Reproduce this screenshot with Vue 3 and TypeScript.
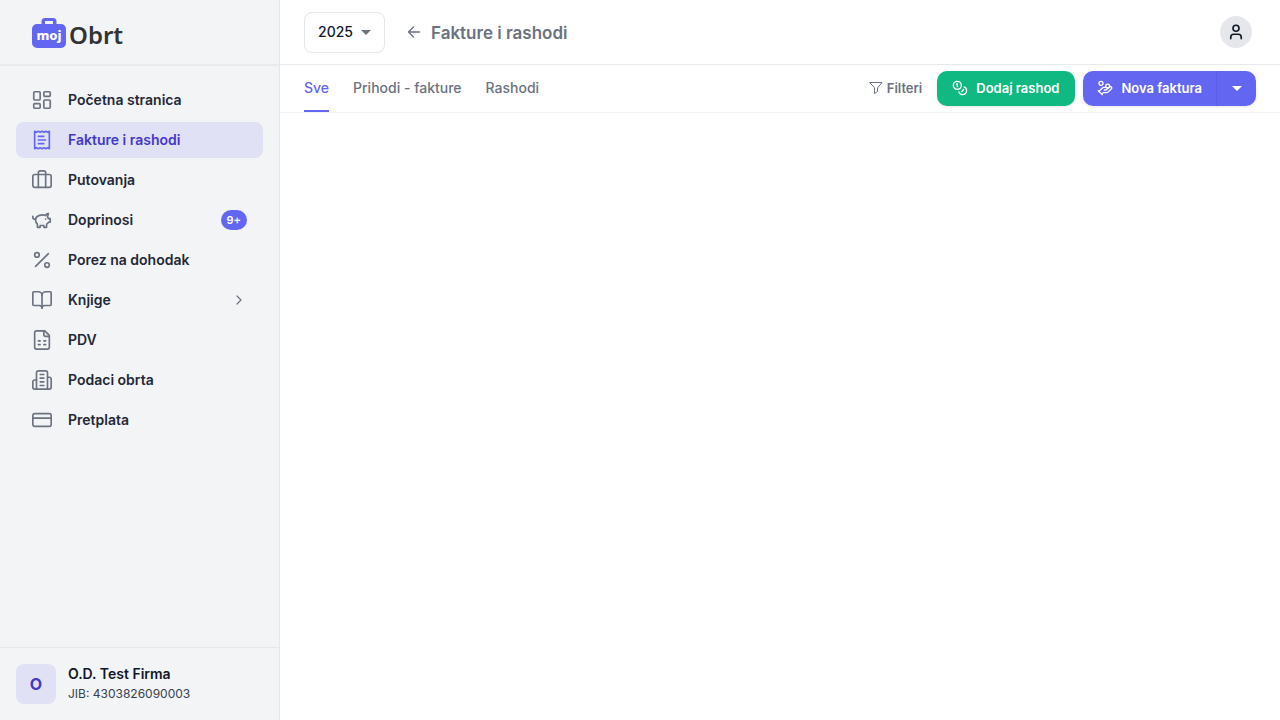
<script setup lang="ts">
import { ref } from 'vue'

interface NavItem {
  label: string
  paths: string[]
  badge?: string
  expandable?: boolean
}

const items: NavItem[] = [
  {
    label: 'Početna stranica',
    paths: ['M4 3h5a1 1 0 0 1 1 1v7a1 1 0 0 1-1 1H4a1 1 0 0 1-1-1V4a1 1 0 0 1 1-1z', 'M15 3h5a1 1 0 0 1 1 1v3a1 1 0 0 1-1 1h-5a1 1 0 0 1-1-1V4a1 1 0 0 1 1-1z', 'M15 12h5a1 1 0 0 1 1 1v7a1 1 0 0 1-1 1h-5a1 1 0 0 1-1-1v-7a1 1 0 0 1 1-1z', 'M4 16h5a1 1 0 0 1 1 1v3a1 1 0 0 1-1 1H4a1 1 0 0 1-1-1v-3a1 1 0 0 1 1-1z'],
  },
  {
    label: 'Fakture i rashodi',
    paths: ['M4 2.500v19l2-1 2 1 2-1 2 1 2-1 2 1 2-1 2 1v-19l-2 1-2-1-2 1-2-1-2 1-2-1-2 1z', 'M8 8h6M8 12h8M8 16h6'],
  },
  {
    label: 'Putovanja',
    paths: ['M4 6h16a2 2 0 0 1 2 2v10a2 2 0 0 1-2 2H4a2 2 0 0 1-2-2V8a2 2 0 0 1 2-2z', 'M8 20V4a2 2 0 0 1 2-2h4a2 2 0 0 1 2 2v16'],
  },
  {
    label: 'Doprinosi',
    badge: '9+',
    paths: ['M19 5c-1.500 0-2.800 1.400-3 2-3.500-1.500-11-.3-11 5 0 1.800.4 3.100 2 4.600V20h3v-2h4v2h3v-3.500c1-.5 1.700-1 2-2h2v-4h-2c0-1-.5-1.500-1-2z', 'M2 8v1c0 1.100.9 2 2 2h1', 'M16 11h.01'],
  },
  {
    label: 'Porez na dohodak',
    paths: ['M19 5 5 19', 'M9 6.500a2.500 2.500 0 1 1-5 0 2.500 2.500 0 0 1 5 0z', 'M20 17.500a2.500 2.500 0 1 1-5 0 2.500 2.500 0 0 1 5 0z'],
  },
  {
    label: 'Knjige',
    expandable: true,
    paths: ['M12 7v14', 'M3 18a1 1 0 0 1-1-1V4a1 1 0 0 1 1-1h5a4 4 0 0 1 4 4 4 4 0 0 1 4-4h5a1 1 0 0 1 1 1v13a1 1 0 0 1-1 1h-6a3 3 0 0 0-3 3 3 3 0 0 0-3-3z'],
  },
  {
    label: 'PDV',
    paths: ['M15 2H6a2 2 0 0 0-2 2v16a2 2 0 0 0 2 2h12a2 2 0 0 0 2-2V7z', 'M14 2v4a2 2 0 0 0 2 2h4', 'M8 13h2M14 13h2M8 17h2M14 17h2'],
  },
  {
    label: 'Podaci obrta',
    paths: ['M6 22V4a2 2 0 0 1 2-2h8a2 2 0 0 1 2 2v18z', 'M6 12H4a2 2 0 0 0-2 2v6a2 2 0 0 0 2 2h2', 'M18 9h2a2 2 0 0 1 2 2v9a2 2 0 0 1-2 2h-2', 'M10 6h4M10 10h4M10 14h4M10 18h4'],
  },
  {
    label: 'Pretplata',
    paths: ['M4 5h16a2 2 0 0 1 2 2v10a2 2 0 0 1-2 2H4a2 2 0 0 1-2-2V7a2 2 0 0 1 2-2z', 'M2 10h20'],
  },
]

const activeItem = ref('Fakture i rashodi')
const tabs = ['Sve', 'Prihodi - fakture', 'Rashodi']
const activeTab = ref('Sve')
const year = ref('2025')
</script>

<template>
  <div class="app">
    <aside class="sidebar">
      <a class="brand" href="#" aria-label="moj Obrt">
        <span class="case">
          <svg class="case-shape" viewBox="0 0 34 30" aria-hidden="true">
            <path fill="#6366f1" fill-rule="evenodd" d="M13 0h8a3.500 3.500 0 0 1 3.500 3.500V6H29a5 5 0 0 1 5 5v14a5 5 0 0 1-5 5H5a5 5 0 0 1-5-5V11a5 5 0 0 1 5-5h4.500V3.500A3.500 3.500 0 0 1 13 0zm0 3v3h8V3z" />
          </svg>
          <span class="case-text">moj</span>
        </span>
        <span class="brand-text">Obrt</span>
      </a>

      <nav class="nav">
        <a v-for="item in items" :key="item.label" href="#" class="nav-item" :class="{ active: item.label === activeItem }" @click.prevent="activeItem = item.label">
          <svg class="nav-icon" viewBox="0 0 24 24" aria-hidden="true">
            <path v-for="d in item.paths" :key="d" :d="d" />
          </svg>
          <span class="nav-label">{{ item.label }}</span>
          <span v-if="item.badge" class="badge">{{ item.badge }}</span>
          <svg v-if="item.expandable" class="chevron" viewBox="0 0 16 16" aria-hidden="true"><path d="m6 4 4 4-4 4" /></svg>
        </a>
      </nav>

      <div class="company">
        <span class="company-logo">O</span>
        <div>
          <div class="company-name">O.D. Test Firma</div>
          <div class="company-id">JIB: 4303826090003</div>
        </div>
      </div>
    </aside>

    <main class="main">
      <header class="topbar">
        <span class="year">
          <select v-model="year" aria-label="Godina">
            <option>2025</option>
            <option>2024</option>
          </select>
          <svg class="caret" viewBox="0 0 10 5" aria-hidden="true"><path d="M0 0h10L5 5z" /></svg>
        </span>
        <button class="back" type="button" aria-label="Nazad">
          <svg viewBox="0 0 14 14" aria-hidden="true"><path d="M12.500 7h-11M6.500 2l-5 5 5 5" /></svg>
        </button>
        <h1>Fakture i rashodi</h1>
        <button class="user" type="button" aria-label="Korisnik">
          <svg viewBox="0 0 24 24" aria-hidden="true"><circle cx="12" cy="7" r="4" /><path d="M19 21v-2a4 4 0 0 0-4-4H9a4 4 0 0 0-4 4v2" /></svg>
        </button>
      </header>

      <div class="toolbar">
        <div class="tabs">
          <button v-for="tab in tabs" :key="tab" type="button" class="tab" :class="{ active: tab === activeTab }" @click="activeTab = tab">{{ tab }}</button>
        </div>
        <div class="actions">
          <button class="filter" type="button">
            <svg viewBox="0 0 14 14" aria-hidden="true"><path d="M1 1.500h12L8.500 7v3.500L5.500 12.500V7z" /></svg>
            Filteri
          </button>
          <button class="action green" type="button">
            <svg viewBox="0 0 24 24" aria-hidden="true"><circle cx="8" cy="8" r="6" /><path d="M18.090 10.370A6 6 0 1 1 10.340 18M7 6h1v4M16.710 13.880l.7.710-2.820 2.820" /></svg>
            Dodaj rashod
          </button>
          <div class="split">
            <button class="action" type="button">
              <svg viewBox="0 0 24 24" aria-hidden="true"><path d="M11 15h2a2 2 0 1 0 0-4h-3c-.6 0-1.100.2-1.400.6L3 17M7 21l1.600-1.400c.3-.4.8-.6 1.400-.6h4c1.100 0 2.100-.4 2.800-1.200l4.600-4.400a2 2 0 0 0-2.750-2.910l-4.200 3.900M2 16l6 6" /><circle cx="16" cy="9" r="2.900" /><circle cx="6" cy="5" r="3" /></svg>
              Nova faktura
            </button>
            <button class="more" type="button" aria-label="Više opcija">
              <svg class="caret" viewBox="0 0 10 5" aria-hidden="true"><path d="M0 0h10L5 5z" /></svg>
            </button>
          </div>
        </div>
      </div>
    </main>
  </div>
</template>

<style>
body {
  margin: 0;
}
</style>

<style scoped>
* {
  box-sizing: border-box;
}

.app {
  display: flex;
  min-height: 100vh;
  background: #fff;
  color: #111827;
  font: 500 14px/20px Inter, 'Liberation Sans', sans-serif;
}

a {
  color: inherit;
  text-decoration: none;
}

button,
select {
  margin: 0;
  padding: 0;
  border: 0;
  background: none;
  color: inherit;
  font: inherit;
  cursor: pointer;
}

svg {
  display: block;
  flex: none;
  fill: none;
  stroke: currentColor;
  stroke-linecap: round;
  stroke-linejoin: round;
}

.sidebar {
  display: flex;
  flex: none;
  flex-direction: column;
  width: 280px;
  border-right: 1px solid #e5e7eb;
  background: #f3f4f6;
}

.brand {
  display: flex;
  align-items: center;
  gap: 3px;
  height: 66px;
  padding: 2px 32px 0;
  border-bottom: 2px solid #e9eaee;
}

.case {
  position: relative;
  width: 34px;
  height: 30px;
}

.case-shape {
  width: 34px;
  height: 30px;
  stroke: none;
}

.case-text {
  position: absolute;
  inset: 7px 0 0;
  color: #fff;
  font: 800 13px/20px 'Noto Sans', sans-serif;
  text-align: center;
}

.brand-text {
  padding-top: 3px;
  color: #333;
  font: 600 24px/32px 'Noto Sans', sans-serif;
}

.nav {
  display: flex;
  flex: 1;
  flex-direction: column;
  gap: 4px;
  padding: 16px;
}

.nav-item {
  display: flex;
  align-items: center;
  height: 36px;
  padding: 0 16px 0 15px;
  border-radius: 8px;
  color: #1f2937;
  font-weight: 600;
}

.nav-item.active {
  background: #e0e1f4;
  color: #4338ca;
}

.nav-icon {
  width: 22px;
  height: 22px;
  margin-right: 15px;
  color: #6b7280;
  stroke-width: 1.8;
}

.active .nav-icon {
  color: #6366f1;
}

.nav-label {
  flex: 1;
}

.badge {
  padding: 0 6px;
  border-radius: 10px;
  background: #6366f1;
  color: #fff;
  font-size: 11px;
}

.chevron {
  width: 16px;
  height: 16px;
  color: #6b7280;
  stroke-width: 1.2;
}

.company {
  display: flex;
  align-items: center;
  gap: 12px;
  height: 73px;
  padding: 0 16px;
  border-top: 1px solid #e5e7eb;
}

.company-logo {
  width: 40px;
  border-radius: 8px;
  background: #e0e1f4;
  color: #4338ca;
  font-size: 16px;
  font-weight: 700;
  line-height: 40px;
  text-align: center;
}

.company-name {
  font-weight: 600;
}

.company-id {
  color: #374151;
  font-size: 12px;
  font-weight: 400;
}

.main {
  flex: 1;
  min-width: 0;
}

.topbar {
  display: flex;
  align-items: center;
  height: 65px;
  padding: 0 28px 0 24px;
  border-bottom: 1px solid #e9eaee;
}

.year {
  position: relative;
}

.year select {
  width: 81px;
  height: 41px;
  padding: 0 13px;
  border: 1px solid #e5e7eb;
  border-radius: 8px;
  appearance: none;
}

.caret {
  width: 10px;
  height: 5px;
  fill: currentColor;
  stroke: none;
}

.year .caret {
  position: absolute;
  top: 18px;
  right: 14px;
  color: #6b7280;
  pointer-events: none;
}

.back {
  margin-left: 22px;
  color: #6b7280;
}

.back svg {
  width: 14px;
  height: 14px;
  stroke-width: 1.4;
}

h1 {
  flex: 1;
  margin: 0 0 0 10px;
  padding-top: 2px;
  color: #6b7280;
  font-size: 17px;
  font-weight: 600;
  line-height: 24px;
}

.user {
  display: grid;
  place-items: center;
  width: 32px;
  height: 32px;
  border-radius: 50%;
  background: #e5e7eb;
}

.user svg {
  width: 18px;
  height: 18px;
  stroke-width: 2.2;
}

.toolbar {
  display: flex;
  align-items: center;
  justify-content: space-between;
  height: 48px;
  padding: 0 24px;
  border-bottom: 1px solid #f3f4f6;
}

.tabs {
  display: flex;
  gap: 24px;
  height: 47px;
}

.tab {
  border-bottom: 2px solid transparent;
  color: #6b7280;
}

.tab.active {
  border-bottom-color: #6366f1;
  color: #6366f1;
}

.actions {
  display: flex;
  align-items: center;
  padding-bottom: 1px;
  font-size: 13px;
  font-weight: 600;
}

.filter {
  display: flex;
  align-items: center;
  gap: 4px;
  margin-right: 15px;
  color: #6b7280;
}

.filter svg {
  width: 14px;
  height: 14px;
}

.action {
  display: flex;
  align-items: center;
  gap: 8px;
  height: 35px;
  padding: 0 14px;
  color: #fff;
}

.action svg {
  width: 16px;
  height: 16px;
  stroke-width: 2;
}

.green {
  margin-right: 8px;
  padding: 0 16px 0 15px;
  border-radius: 10px;
  background: #10b981;
  box-shadow: 0 1px 3px #0000001a;
}

.split {
  display: flex;
  border-radius: 10px;
  background: #6366f1;
  box-shadow: 0 1px 3px #0000001a;
}

.more {
  display: grid;
  place-items: center;
  width: 40px;
  border-left: 1px solid #5b5ee4;
  color: #fff;
}
</style>
